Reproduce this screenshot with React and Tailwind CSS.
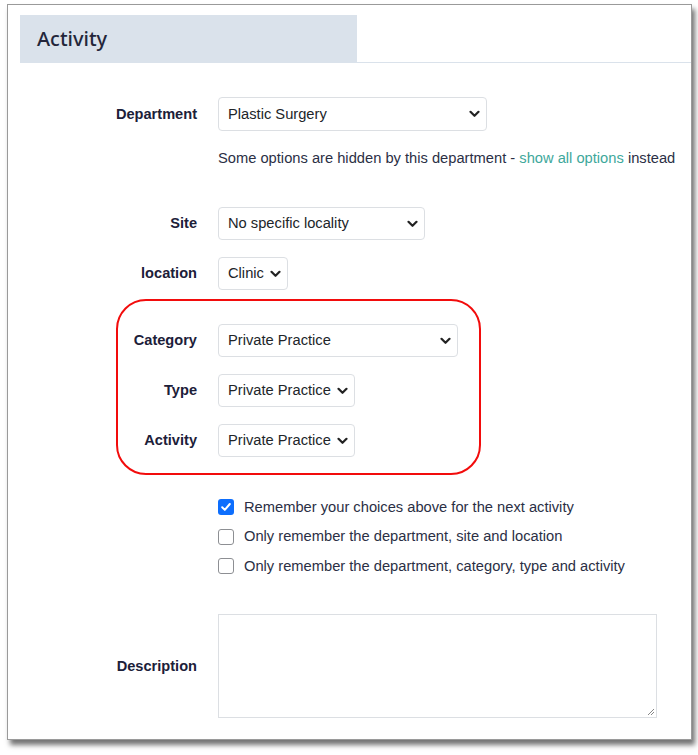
import React from "react";

const font = { fontFamily: '"Liberation Sans", Arial, sans-serif' };

function Chevron() {
  return (
    <svg width="11" height="8" viewBox="0 0 11 8" className="shrink-0">
      <path d="M1.5 1.8 L5.5 5.8 L9.5 1.8" fill="none" stroke="#222" strokeWidth="2.2" strokeLinecap="round" strokeLinejoin="round" />
    </svg>
  );
}

function Select({ value, width, h = "h-[33px]" }) {
  return (
    <div className={`${width} ${h} flex items-center justify-between border border-[#dcdfe3] rounded-[4px] bg-white pl-[9px] pr-[6px] text-[14.7px] text-[#212529]`}>
      <span className="whitespace-nowrap">{value}</span>
      <Chevron />
    </div>
  );
}

function Row({ label, children, className = "" }) {
  return (
    <div className={`flex items-center ${className}`}>
      <div className="w-[189px] text-right text-[14.6px] font-bold text-[#1c2039] pt-[1px]">{label}</div>
      <div className="ml-[21px]">{children}</div>
    </div>
  );
}

function Check({ checked, label }) {
  return (
    <div className="flex items-center h-[20px]">
      {checked ? (
        <div className="w-[16px] h-[16px] rounded-[3px] bg-[#0d6efd] flex items-center justify-center">
          <svg width="12" height="12" viewBox="0 0 12 12">
            <path d="M2.2 6.3 L4.8 8.9 L9.8 3" fill="none" stroke="#fff" strokeWidth="2" strokeLinecap="round" strokeLinejoin="round" />
          </svg>
        </div>
      ) : (
        <div className="w-[16px] h-[16px] rounded-[3px] border border-[#8d8f93] bg-white" />
      )}
      <span className="ml-[10px] text-[14.7px] text-[#2b2f45]">{label}</span>
    </div>
  );
}

export default function App() {
  return (
    <div className="w-[698px] h-[755px] bg-white overflow-hidden" style={font}>
      <div className="relative ml-[7px] mt-[4px] w-[685px] h-[736px] bg-white border border-[#9a9a9a] shadow-[3px_5px_5px_rgba(0,0,0,0.55)]">
        <div className="flex mt-[10px] ml-[12px]">
          <div className="w-[337px] h-[48px] bg-[#dae2eb] flex items-center pl-[17px]">
            <span className="text-[20px] font-medium text-[#23263a]" style={{ fontFamily: '"Noto Sans", Inter, sans-serif' }}>Activity</span>
          </div>
          <div className="flex-1 border-b border-[#dae2eb]" />
        </div>

        <Row label="Department" className="mt-[34px]">
          <Select value="Plastic Surgery" width="w-[269px]" h="h-[34px]" />
        </Row>
        <div className="ml-[210px] mt-[17px] h-[20px] leading-[20px] text-[14.7px] text-[#2b2f45] whitespace-nowrap">
          Some options are hidden by this department - <span className="text-[#3ea89b]">show all options</span> instead
        </div>

        <Row label="Site" className="mt-[39px]">
          <Select value="No specific locality" width="w-[207px]" />
        </Row>
        <Row label="location" className="mt-[17px]">
          <Select value="Clinic" width="w-[70px]" />
        </Row>

        <div className="relative mt-[34px]">
          <div className="absolute left-[108px] top-[-25px] w-[365px] h-[176px] border-[2.5px] border-[#f20c0c] rounded-[30px]" />
          <Row label="Category">
            <Select value="Private Practice" width="w-[240px]" />
          </Row>
          <Row label="Type" className="mt-[17px]">
            <Select value="Private Practice" width="w-[137px]" />
          </Row>
          <Row label="Activity" className="mt-[17px]">
            <Select value="Private Practice" width="w-[137px]" />
          </Row>
        </div>

        <div className="ml-[210px] mt-[40px] flex flex-col gap-[9.5px]">
          <Check checked label="Remember your choices above for the next activity" />
          <Check label="Only remember the department, site and location" />
          <Check label="Only remember the department, category, type and activity" />
        </div>

        <Row label="Description" className="mt-[38px]">
          <div className="relative w-[439px] h-[104px] border border-[#dcdfe3]">
            <svg width="9" height="9" viewBox="0 0 9 9" className="absolute right-[1px] bottom-[1px]">
              <path d="M8 2 L2 8 M8 5 L5 8" stroke="#888" strokeWidth="1" />
            </svg>
          </div>
        </Row>
      </div>
    </div>
  );
}
